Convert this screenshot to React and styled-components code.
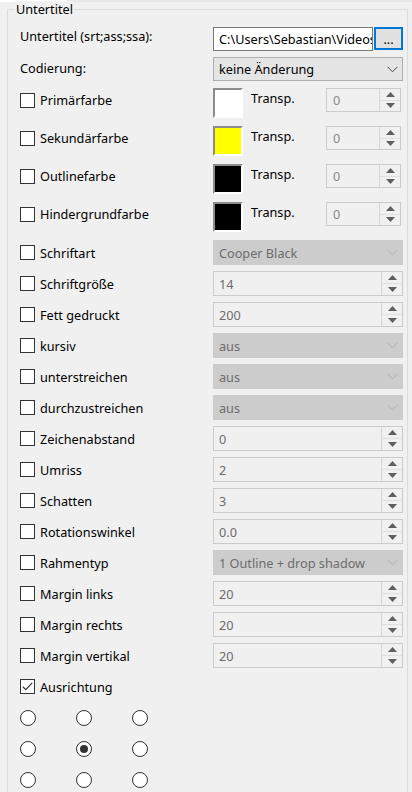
import React from "react";
import styled, { createGlobalStyle } from "styled-components";

const GlobalStyle = createGlobalStyle`
  html, body { margin: 0; padding: 0; background: #f0f0f0; }
  body {
    font-family: "Noto Sans", "Open Sans", sans-serif;
    font-size: 12.7px;
    color: #000;
  }
  * { box-sizing: border-box; }
`;

const Page = styled.div`
  width: 412px;
  height: 792px;
  overflow: hidden;
  display: flex;
  flex-direction: column;
  background: #f0f0f0;
`;

const TopStrip = styled.div`
  height: 2px;
  display: flex;
  flex-shrink: 0;
`;
const TopTab = styled.div`
  width: 67px;
  background: #ffffff;
`;
const TopRest = styled.div`
  flex: 1;
  background: #e6e6e6;
`;

const GroupBox = styled.div`
  position: relative;
  flex: 1;
  margin: 7px 4px 0 7px;
  border: 1px solid #dcdcdc;
  border-bottom: none;
  padding: 17px 0 0 12px;
`;

const Legend = styled.span`
  position: absolute;
  top: -9px;
  left: 7px;
  padding: 0 1px;
  background: #f0f0f0;
  line-height: 16px;
`;

const Footer = styled.div`
  height: 4px;
  flex-shrink: 0;
  border-top: 2px solid #ffffff;
  background: #dadada;
`;

const Form = styled.div`
  display: flex;
  flex-direction: column;
`;

const Row = styled.div`
  display: grid;
  grid-template-columns: 193px 190px;
  height: ${(p) => p.$h}px;
  margin-top: ${(p) => p.$mt || 0}px;
`;

const LabelCell = styled.div`
  display: flex;
  align-items: ${(p) => (p.$top ? "flex-start" : "center")};
  padding-top: ${(p) => p.$pt || 0}px;
  height: ${(p) => (p.$ch ? `${p.$ch}px` : "100%")};
  gap: 5px;
  line-height: 16px;
  white-space: nowrap;
`;

const Box = styled.span`
  width: 15px;
  height: 15px;
  flex-shrink: 0;
  border: 1px solid #333333;
  background: #ffffff;
  display: inline-flex;
  align-items: center;
  justify-content: center;
`;

const ControlCell = styled.div`
  display: flex;
  align-items: flex-start;
`;

const TextBox = styled.div`
  width: 160px;
  height: 24px;
  border: 1px solid #7a7a7a;
  background: #ffffff;
  padding: 0 0 0 5px;
  line-height: 22px;
  white-space: nowrap;
  overflow: hidden;
  text-overflow: clip;
`;

const BrowseButton = styled.div`
  width: 29px;
  height: 23px;
  margin-left: 1px;
  border: 2px solid #0078d7;
  background: #e1e1e1;
  display: flex;
  align-items: center;
  justify-content: center;
  line-height: 1;
  padding-top: 1px;
`;

const Combo = styled.div`
  width: 190px;
  height: ${(p) => p.$h || 24}px;
  border: 1px solid ${(p) => (p.$disabled ? "#cccccc" : "#adadad")};
  background: ${(p) => (p.$disabled ? "#cccccc" : "#e5e5e5")};
  color: ${(p) => (p.$disabled ? "#6d6d6d" : "#000000")};
  display: flex;
  align-items: center;
  padding: 0 4px 0 5px;
  line-height: 16px;
`;

const ComboText = styled.span`
  flex: 1;
  white-space: nowrap;
  overflow: hidden;
`;

const Swatch = styled.div`
  width: 30px;
  height: 30px;
  border-style: solid;
  border-width: 2px;
  border-color: #8c8c8c #ffffff #ffffff #8c8c8c;
  background: ${(p) => p.$color};
  flex-shrink: 0;
`;

const TranspLabel = styled.span`
  margin-left: 8px;
  line-height: 16px;
  padding-top: 2px;
`;

const Spinner = styled.div`
  width: ${(p) => p.$w}px;
  height: ${(p) => p.$h}px;
  margin-left: ${(p) => (p.$push ? "auto" : "0")};
  margin-right: ${(p) => p.$mr || 0}px;
  border: 1px solid #cccccc;
  background: #f0f0f0;
  display: flex;
`;

const SpinText = styled.span`
  flex: 1;
  padding-left: ${(p) => p.$pl || 5}px;
  color: ${(p) => p.$c || "#6d6d6d"};
  display: flex;
  align-items: center;
  line-height: 16px;
`;

const SpinButtons = styled.div`
  width: 21px;
  border-left: 1px solid #d6d6d6;
  display: flex;
  flex-direction: column;
`;

const SpinHalf = styled.div`
  flex: 1;
  display: flex;
  align-items: center;
  justify-content: center;
  border-top: ${(p) => (p.$down ? "1px solid #e0e0e0" : "none")};
`;

const RadioRow = styled.div`
  height: 25px;
  margin-top: 6px;
  display: flex;
  align-items: center;
  gap: 40px;
`;

const Radio = styled.span`
  width: 16px;
  height: 16px;
  border-radius: 50%;
  border: 1px solid #333333;
  background: #ffffff;
  display: inline-flex;
  align-items: center;
  justify-content: center;
  &::after {
    content: "";
    width: 8px;
    height: 8px;
    border-radius: 50%;
    background: ${(p) => (p.$on ? "#333333" : "transparent")};
  }
`;

const Chevron = ({ color }) => (
  <svg width="11" height="7" viewBox="0 0 11 7">
    <polyline points="0.5,0.8 5.5,5.8 10.5,0.8" fill="none" stroke={color} strokeWidth="1" />
  </svg>
);

const Arrow = ({ down }) => (
  <svg width="9" height="5" viewBox="0 0 9 5">
    {down ? <polygon points="0,0 9,0 4.5,5" fill="#5f5f5f" /> : <polygon points="4.5,0 9,5 0,5" fill="#5f5f5f" />}
  </svg>
);

const Check = () => (
  <svg width="11" height="9" viewBox="0 0 11 9">
    <polyline points="0.8,4.6 3.8,7.6 10.2,0.8" fill="none" stroke="#333" strokeWidth="1.2" />
  </svg>
);

const CheckLabel = ({ label, checked, ch }) => (
  <LabelCell $ch={ch}>
    <Box>{checked && <Check />}</Box>
    <span>{label}</span>
  </LabelCell>
);

const NumSpinner = ({ value, w = 190, h = 25, push, mr, pl, c }) => (
  <Spinner $w={w} $h={h} $push={push} $mr={mr}>
    <SpinText $pl={pl} $c={c}>{value}</SpinText>
    <SpinButtons>
      <SpinHalf>
        <Arrow />
      </SpinHalf>
      <SpinHalf $down>
        <Arrow down />
      </SpinHalf>
    </SpinButtons>
  </Spinner>
);

const DisabledCombo = ({ value }) => (
  <Combo $disabled $h={25}>
    <ComboText>{value}</ComboText>
    <Chevron color="#b0b0b0" />
  </Combo>
);

const colorRows = [
  { label: "Primärfarbe", color: "#ffffff", mt: 7 },
  { label: "Sekundärfarbe", color: "#ffff00", mt: 8 },
  { label: "Outlinefarbe", color: "#000000", mt: 8 },
  { label: "Hindergrundfarbe", color: "#000000", mt: 8 },
];

const optionRows = [
  { label: "Schriftart", type: "combo", value: "Cooper Black", mt: 8 },
  { label: "Schriftgröße", type: "spin", value: "14" },
  { label: "Fett gedruckt", type: "spin", value: "200" },
  { label: "kursiv", type: "combo", value: "aus" },
  { label: "unterstreichen", type: "combo", value: "aus" },
  { label: "durchzustreichen", type: "combo", value: "aus" },
  { label: "Zeichenabstand", type: "spin", value: "0" },
  { label: "Umriss", type: "spin", value: "2" },
  { label: "Schatten", type: "spin", value: "3" },
  { label: "Rotationswinkel", type: "spin", value: "0.0" },
  { label: "Rahmentyp", type: "combo", value: "1 Outline + drop shadow" },
  { label: "Margin links", type: "spin", value: "20" },
  { label: "Margin rechts", type: "spin", value: "20" },
  { label: "Margin vertikal", type: "spin", value: "20" },
];

export default function App() {
  return (
    <Page>
      <GlobalStyle />
      <TopStrip>
        <TopTab />
        <TopRest />
      </TopStrip>
      <GroupBox>
        <Legend>Untertitel</Legend>
        <Form>
          <Row $h={24}>
            <LabelCell $top $pt={1}>Untertitel (srt;ass;ssa):</LabelCell>
            <ControlCell>
              <TextBox>C:\Users\Sebastian\Videos</TextBox>
              <BrowseButton>...</BrowseButton>
            </ControlCell>
          </Row>
          <Row $h={24} $mt={6}>
            <LabelCell $top $pt={3}>Codierung:</LabelCell>
            <ControlCell>
              <Combo>
                <ComboText>keine Änderung</ComboText>
                <Chevron color="#444444" />
              </Combo>
            </ControlCell>
          </Row>
          {colorRows.map((r) => (
            <Row key={r.label} $h={30} $mt={r.mt}>
              <CheckLabel label={r.label} ch={24} />
              <ControlCell>
                <Swatch $color={r.color} />
                <TranspLabel>Transp.</TranspLabel>
                <NumSpinner value="0" w={75} h={24} push mr={2} pl={6} c="#8a8a8a" />
              </ControlCell>
            </Row>
          ))}
          {optionRows.map((r) => (
            <Row key={r.label} $h={25} $mt={r.mt || 6}>
              <CheckLabel label={r.label} />
              <ControlCell>
                {r.type === "combo" ? <DisabledCombo value={r.value} /> : <NumSpinner value={r.value} />}
              </ControlCell>
            </Row>
          ))}
          <Row $h={25} $mt={6}>
            <CheckLabel label="Ausrichtung" checked />
            <div />
          </Row>
          {[0, 1, 2].map((i) => (
            <RadioRow key={i}>
              <Radio $on={false} />
              <Radio $on={i === 1} />
              <Radio $on={false} />
            </RadioRow>
          ))}
        </Form>
      </GroupBox>
      <Footer />
    </Page>
  );
}
